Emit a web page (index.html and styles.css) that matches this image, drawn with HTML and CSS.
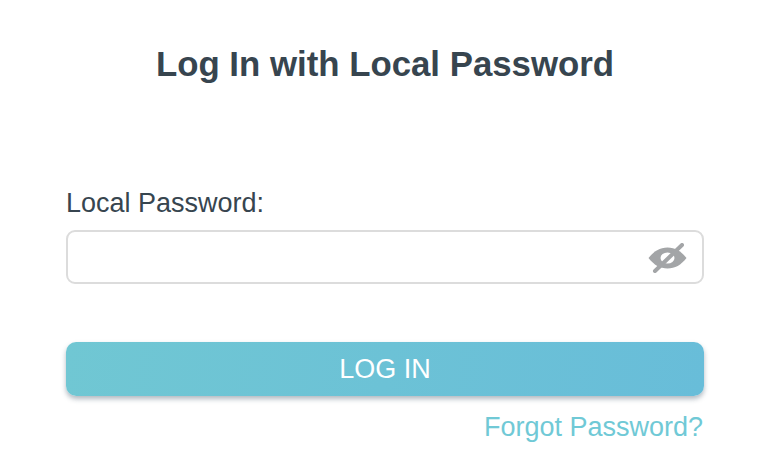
FILE: index.html
```html
<!DOCTYPE html>
<html lang="en">
<head>
    <meta charset="UTF-8">
    <title>Log In with Local Password</title>
    <link rel="stylesheet" href="styles.css">
</head>
<body>
    <div class="container">
        <h1>Log In with Local Password</h1>
        <label class="field-label" for="localPassword">Local Password:</label>
        <div class="password-box">
            <input type="password" id="localPassword">
            <svg class="eye-icon" width="40" height="34" viewBox="0 0 40 34">
                <path d="M0.500 17C6 10 12 6.500 19.500 6.500S33 10 38.500 17C33 24 27 27.500 19.500 27.500S6 24 0.500 17Z" fill="#a3a5a7"/>
                <ellipse cx="19.500" cy="17" rx="7" ry="5.500" fill="#fff"/>
                <path d="M7 30L34 4" stroke="#a3a5a7" stroke-width="4" stroke-linecap="round"/>
            </svg>
        </div>
        <button class="login-btn">LOG IN</button>
        <div class="forgot-row">
            <a class="forgot-link" href="#">Forgot Password?</a>
        </div>
    </div>
</body>
</html>
```

FILE: styles.css
```css
body {
    margin: 0;
    background-color: #fff;
    font-family: "Liberation Sans", Arial, sans-serif;
    color: #37454f;
}

.container {
    width: 638px;
    margin-left: 66px;
    padding-top: 45px;
    display: flex;
    flex-direction: column;
}

h1 {
    margin: 0 0 105px;
    font-size: 34.800px;
    line-height: 38px;
    font-weight: bold;
    text-align: center;
}

.field-label {
    font-size: 27px;
    line-height: 30px;
    margin-bottom: 12px;
}

.password-box {
    height: 54px;
    box-sizing: border-box;
    border: 2px solid #dcdcdc;
    border-radius: 9px;
    display: flex;
    align-items: center;
    padding-right: 14px;
    margin-bottom: 58px;
}

.password-box input {
    flex: 1;
    min-width: 0;
    height: 100%;
    padding: 0 14px;
    border: none;
    background: transparent;
    outline: none;
}

.eye-icon {
    margin-top: 2px;
    filter: blur(0.7px);
}

.login-btn {
    height: 54px;
    border: none;
    border-radius: 10px;
    background: linear-gradient(100deg, #70c7d3, #68bdd9);
    box-shadow: 0 3px 5px rgba(60, 80, 100, 0.4);
    color: #fff;
    font-family: inherit;
    font-size: 27px;
    padding: 0;
    margin-bottom: 15px;
}

.forgot-row {
    text-align: right;
    padding-right: 1px;
}

.forgot-link {
    color: #70c9d6;
    font-size: 27px;
    line-height: 32px;
    text-decoration: none;
}
```
